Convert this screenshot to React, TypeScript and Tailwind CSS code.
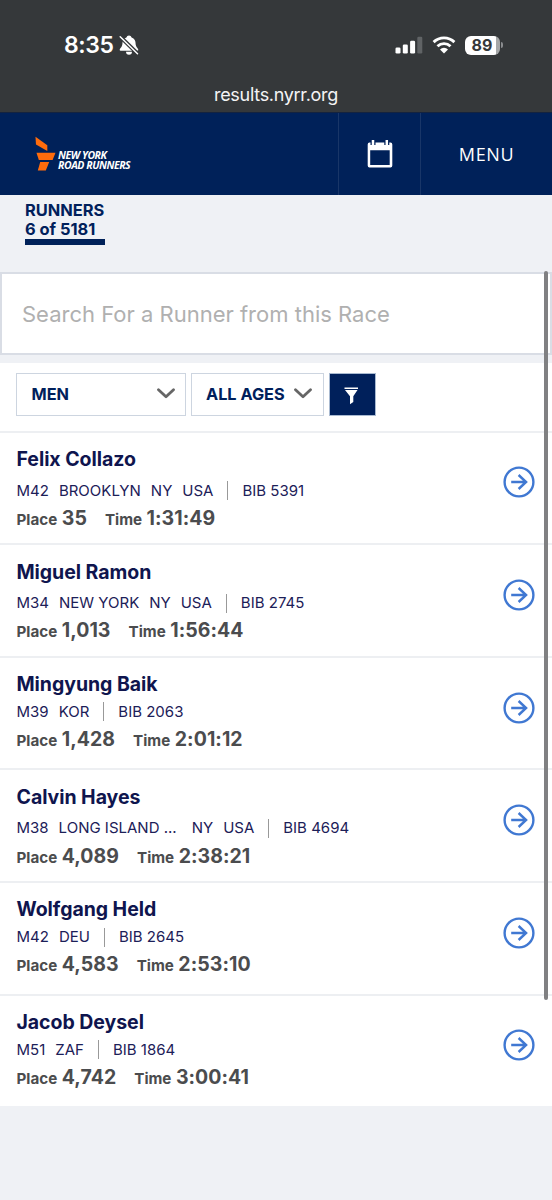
type Runner = {
  name: string;
  age: string;
  city?: string;
  state?: string;
  country: string;
  bib: string;
  place: string;
  time: string;
};

const runners: Runner[] = [
  { name: "Felix Collazo", age: "M42", city: "BROOKLYN", state: "NY", country: "USA", bib: "5391", place: "35", time: "1:31:49" },
  { name: "Miguel Ramon", age: "M34", city: "NEW YORK", state: "NY", country: "USA", bib: "2745", place: "1,013", time: "1:56:44" },
  { name: "Mingyung Baik", age: "M39", country: "KOR", bib: "2063", place: "1,428", time: "2:01:12" },
  { name: "Calvin Hayes", age: "M38", city: "LONG ISLAND ...", state: "NY", country: "USA", bib: "4694", place: "4,089", time: "2:38:21" },
  { name: "Wolfgang Held", age: "M42", country: "DEU", bib: "2645", place: "4,583", time: "2:53:10" },
  { name: "Jacob Deysel", age: "M51", country: "ZAF", bib: "1864", place: "4,742", time: "3:00:41" },
];

function StatusBar() {
  return (
    <div className="h-[113px] border-b border-[#14233f] bg-[#35383a] text-white">
      <div className="flex h-[79px] items-center pt-[11px] pr-[49px] pl-[64px]">
        <span className="w-[50px] text-[23px] leading-7 font-semibold tracking-[-0.4px] whitespace-nowrap">8:35</span>
        <svg className="ml-[5px]" width="20" height="20" viewBox="0 0 20 20">
          <path d="M7.4 2.500a2.700 2.700 0 0 1 5.200 0c3 1 4 3.500 4 6.300 0 3.200 2.700 4.500 2.700 6.100 0 .5-.4.8-.9.8H1.600c-.5 0-.9-.3-.9-.8 0-1.600 2.700-2.900 2.700-6.100 0-2.800 1-5.300 4-6.300z" fill="white" />
          <path d="M7 16.800h6a3 3 0 0 1-6 0z" fill="white" />
          <path d="M.9 1.400 19 19" stroke="#35383a" strokeWidth="4" />
          <path d="M1.200 1.800 18.500 18.700" stroke="white" strokeWidth="1.500" strokeLinecap="round" />
        </svg>
        <svg className="ml-auto" width="28" height="18" viewBox="0 0 28 18">
          <rect x="0.500" y="11.500" width="5" height="6" rx="1.300" fill="white" />
          <rect x="7.800" y="8.500" width="5" height="9" rx="1.300" fill="white" />
          <rect x="15.100" y="4.800" width="5" height="12.700" rx="1.300" fill="white" />
          <rect x="22.300" y="0.800" width="5" height="16.700" rx="1.300" fill="#606365" />
        </svg>
        <svg className="ml-[9px]" width="24" height="18" viewBox="0 0 24 18">
          <g fill="none" stroke="white" strokeWidth="2.900">
            <path d="M1.600 6.100a15 15 0 0 1 20.800 0" />
            <path d="M5.500 10.200a9.400 9.400 0 0 1 13 0" />
          </g>
          <path d="M8 13.400a5.800 5.800 0 0 1 8 0l-4 4.100z" fill="white" />
        </svg>
        <div className="ml-[9px] flex items-center">
          <div className="flex h-[19px] w-[35px] items-center justify-center rounded-[6px] bg-[linear-gradient(90deg,#fff_0_31px,#a5a7a8_31px)] pr-[1px] text-[16px] leading-none font-bold text-[#35383a]">
            89
          </div>
          <div className="ml-[1px] h-[6px] w-[2px] rounded-r-full bg-[#8a8c8e]" />
        </div>
      </div>
      <div className="text-center text-[18px] leading-[32px] tracking-[-0.300px] text-[#f4f4f5]">results.nyrr.org</div>
    </div>
  );
}

function NavBar() {
  return (
    <div className="flex h-[82px] bg-[#002159] text-white">
      <div className="flex flex-1 items-start pt-[23px] pl-[35px]">
        <svg width="21" height="36" viewBox="0 0 21 36" fill="#ff6c0c">
          <path d="M.5.800 12.300 9.200V15L1 8.400z" />
          <path d="M1.500 16.800H20.500L17.600 24H3.800z" />
          <path d="M5.200 26H14.200L10.800 34.500H2.800z" />
        </svg>
        <div className="mt-[14px] ml-[2px] font-['Open_Sans','Noto_Sans',sans-serif] text-[10.500px] leading-[10.300px] font-bold tracking-[-0.450px] whitespace-pre-line italic">
          {"NEW YORK\nROAD RUNNERS"}
        </div>
      </div>
      <div className="flex w-[83px] justify-center border-x border-[#193668] pt-[27px]">
        <svg className="ml-[1px]" width="26" height="28" viewBox="0 0 26 28">
          <path fillRule="evenodd" d="M2.500 2.500H23.500Q25.300 2.500 25.300 4.500V25.500Q25.300 27.500 23.500 27.500H2.500Q.7 27.500.7 25.500V4.500Q.7 2.500 2.500 2.500ZM3.200 10.300V25.100H22.700V10.300Z" fill="white" />
          <path d="M6 0V5M19.800 0V5" stroke="#002159" strokeWidth="5" />
          <path d="M6 0V5M19.800 0V5" stroke="white" strokeWidth="2.500" />
        </svg>
      </div>
      <div className="flex w-[131px] items-center justify-center font-['Open_Sans','Noto_Sans',sans-serif] text-[18px] font-medium tracking-[0.600px]">MENU</div>
    </div>
  );
}

function Chevron() {
  return (
    <svg width="18" height="12" viewBox="0 0 18 12" fill="none">
      <path d="m1.500 1.800 7.500 7 7.500-7" stroke="#666" strokeWidth="2.800" strokeLinecap="round" strokeLinejoin="round" />
    </svg>
  );
}

function Filters() {
  return (
    <div className="flex h-[68px] gap-[5px] bg-white pt-[10px] pl-4 text-[16.300px] font-bold text-[#00205b]">
      <div className="flex h-[43px] w-[170px] items-center justify-between border border-[#cdd5e0] pr-[10px] pl-[14.500px]">
        <span>MEN</span>
        <Chevron />
      </div>
      <div className="flex h-[43px] w-[133px] items-center justify-between border border-[#cdd5e0] pr-[11px] pl-[14px]">
        <span>ALL AGES</span>
        <Chevron />
      </div>
      <div className="flex h-[43px] w-[47px] items-center justify-center border border-[#a9bad1] bg-[#00205b]">
        <svg className="mt-[3px] mr-[2px]" width="15" height="18" viewBox="0 0 15 18" fill="white">
          <path d="M.5.500h13.500v1.400H.5zM1 2.900h12.500L9.300 9.200V15L6 17.200V9.200z" />
        </svg>
      </div>
    </div>
  );
}

function RunnerRow({ runner }: { runner: Runner }) {
  const detail = runner.city ? "mt-[9.600px]" : "mt-[5.600px]";
  return (
    <div className="flex h-[112.600px] justify-between border-t-2 border-[#edeff2] bg-white pl-[16.500px]">
      <div className="pt-[14.500px]">
        <div className="text-[19.500px] leading-6 font-bold tracking-[-0.050px] text-[#0f154e]">{runner.name}</div>
        <div className={`${detail} flex h-5 items-center gap-[10px] text-[15px] leading-5 text-[#1c2058]`}>
          <span>{runner.age}</span>
          {runner.city && <span className={runner.city.endsWith("...") ? "mr-[5px]" : ""}>{runner.city}</span>}
          {runner.state && <span>{runner.state}</span>}
          <span>{runner.country}</span>
          <span className="mx-[4px] h-[19px] w-px bg-[#999]" />
          <span>BIB {runner.bib}</span>
        </div>
        <div className="mt-[5.100px] flex items-baseline text-[15.200px] leading-6 font-bold text-[#4b4c4e]">
          <span>Place</span>
          <span className="ml-[4.500px] text-[19.500px] tracking-[0.050px]">{runner.place}</span>
          <span className="ml-[18px]">Time</span>
          <span className="ml-[4.500px] text-[19.500px] tracking-[0.050px]">{runner.time}</span>
        </div>
      </div>
      <svg className="mt-[33.800px] mr-[17px]" width="32" height="32" viewBox="0 0 32 32" fill="none" stroke="#4078d2" strokeWidth="2.400">
        <circle cx="16" cy="16" r="14.400" />
        <path d="M8.200 16H23.500M15.600 9l7.500 7-7.500 7" />
      </svg>
    </div>
  );
}

export default function App() {
  return (
    <div className="relative h-[1200px] w-[552px] overflow-hidden bg-[#eff1f5] font-['Inter',sans-serif]">
      <StatusBar />
      <NavBar />
      <div className="h-[77px] pt-[6px] pl-[25px]">
        <div className="h-[44px] w-[80px] border-b-[6px] border-[#002159] text-[16.400px] leading-[19px] font-bold whitespace-nowrap text-[#00205b]">
          <div>RUNNERS</div>
          <div>6 of 5181</div>
        </div>
      </div>
      <div className="flex h-[83px] items-center border-2 border-[#d9dde5] bg-white pt-px pl-5 text-[22px] font-normal text-[#b0b0b0]">
        Search For a Runner from this Race
      </div>
      <div className="h-[7.600px]" />
      <Filters />
      {runners.map((runner) => (
        <RunnerRow key={runner.bib} runner={runner} />
      ))}
      <div className="absolute top-[271px] right-[4px] h-[729px] w-[4px] rounded-full bg-[#808082]" />
    </div>
  );
}
